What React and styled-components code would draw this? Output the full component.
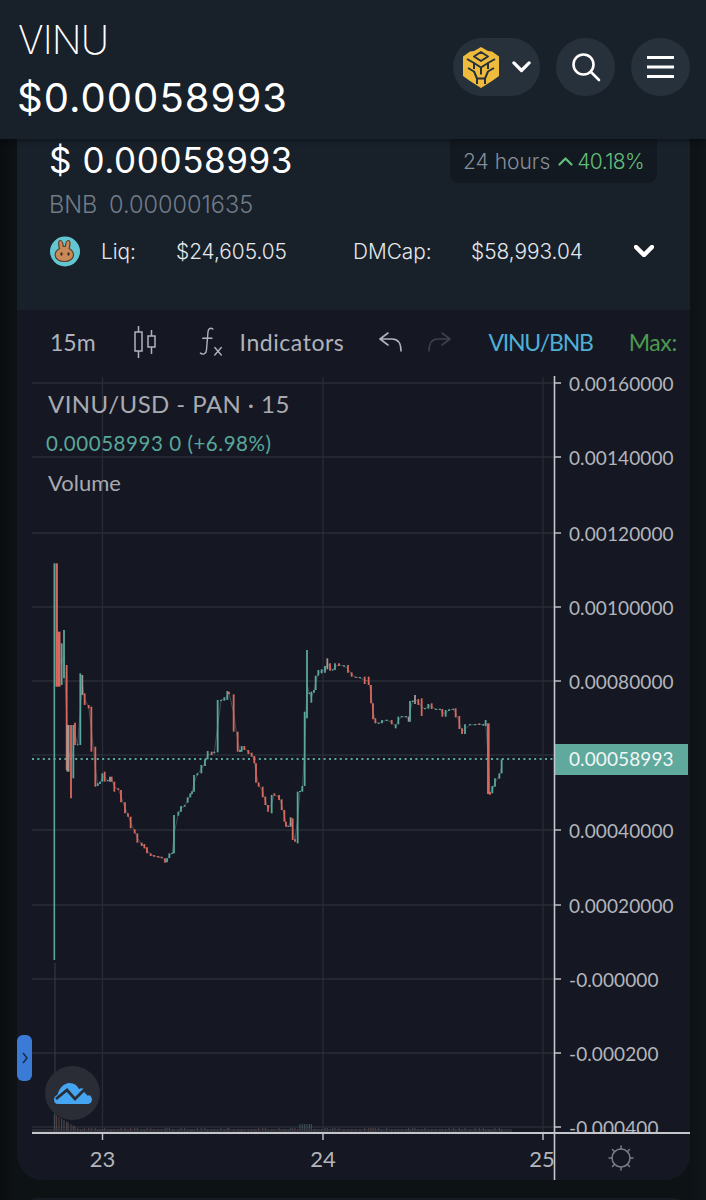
import React from "react";
import styled, { createGlobalStyle } from "styled-components";

const Global = createGlobalStyle`
  html, body { margin: 0; padding: 0; background: #0c1114; }
  body { width: 706px; height: 1200px; overflow: hidden; font-family: Inter, "Liberation Sans", sans-serif; }
`;

const Page = styled.div`
  width: 706px; height: 1200px; overflow: hidden; display: flex; flex-direction: column;
  background: linear-gradient(90deg, #090d10 0, #0d1215 17px, #0d1215 690px, #0f1519 706px);
`;
const Header = styled.header`
  height: 139px; flex: none; box-sizing: border-box; padding: 17px 16px 0 18px; background: #18202a;
  display: flex; justify-content: space-between; align-items: flex-start;
  box-shadow: 0 2px 5px rgba(0,0,0,.35); position: relative; z-index: 2;
`;
const TitleBlock = styled.div`display: flex; flex-direction: column; color: #fff;`;
const Symbol = styled.div`font-size: 39px; line-height: 46px; font-weight: 200; letter-spacing: -.9px;`;
const HeadPrice = styled.div`font-size: 40px; line-height: 52px; margin-top: 9px; font-weight: 400; letter-spacing: 1.05px; margin-left: -1px;`;
const Actions = styled.div`display: flex; gap: 16px; margin-top: 21px;`;
const Round = styled.button`
  height: 58px; width: ${p => p.$w || 59}px; border: 0; padding: 0; border-radius: 29px; background: #27313b; color: #fff;
  display: flex; align-items: center; justify-content: center; gap: 13px;
`;
const Summary = styled.section`
  flex: none; height: 171px; margin: 0 16px 0 17px; box-sizing: border-box; padding: 0 33px; background: #18202a;
  display: flex; flex-direction: column;
`;
const SumTop = styled.div`display: flex; justify-content: space-between; align-items: flex-start;`;
const SumPrice = styled.div`font-size: 35px; line-height: 44px; color: #fff; font-weight: 400; margin: -1px 0 0 -1px; letter-spacing: .6px;`;
const Change = styled.div`
  width: 207px; height: 44px; box-sizing: border-box; padding: 0 13px; border-radius: 0 0 9px 9px;
  background: #121920; display: flex; align-items: center; font-size: 21px; font-weight: 300; color: #868e9a; white-space: nowrap;
`;
const Up = styled.span`color: #62bd7c; display: inline-flex; align-items: center; gap: 4px; margin-left: 8px; letter-spacing: -.6px;`;
const Bnb = styled.div`font-size: 23.5px; line-height: 30px; color: #717b88; font-weight: 300; margin: 7px 0 0 -1px; word-spacing: 5px;`;
const Stats = styled.div`display: flex; align-items: center; height: 32px; margin-top: 15px; color: #e5e8ec; font-size: 20.8px; font-weight: 300; white-space: nowrap;`;
const Stat = styled.span`width: ${p => p.$w}px; flex: none;`;
const CornerChevron = styled.span`color: #fff; display: flex;`;
const ChartPanel = styled.section`
  flex: none; height: 870px; margin: 0 16px 0 17px; background: #151822; border-radius: 0 0 25px 25px;
  display: flex; flex-direction: column; position: relative; overflow: hidden; font-family: Lato, "Liberation Sans", sans-serif;
`;
const Toolbar = styled.div`
  height: 65px; flex: none; box-sizing: border-box; padding: 0 0 2px 33px; display: flex; align-items: center; font-size: 23px; white-space: nowrap; overflow: hidden;
`;
const ToolText = styled.span`color: ${p => p.$c || "#b0b3bb"}; margin-left: ${p => p.$ml || 0}px; letter-spacing: ${p => p.$ls || 0}px; flex: none;`;
const ToolIcon = styled.svg`margin-left: ${p => p.$ml || 0}px; flex: none;`;
const ChartArea = styled.div`position: relative; flex: 1; min-height: 0;`;
const Plot = styled.svg`display: block;`;
const PriceText = styled.text`font-family: Lato, "Liberation Sans", sans-serif; font-size: 19px; fill: #b3b5bc; letter-spacing: .1px;`;
const TimeText = styled.text`font-family: Lato, "Liberation Sans", sans-serif; font-size: 22px; fill: #b3b5bc; text-anchor: middle;`;
const TagText = styled.text`font-family: Lato, "Liberation Sans", sans-serif; font-size: 19px; fill: #f2f6f5; letter-spacing: .1px;`;
const Legend = styled.div`position: absolute; left: 31px; top: 10px; display: flex; flex-direction: column; align-items: flex-start;`;
const LegendTitle = styled.div`font-size: 24px; line-height: 38px; color: #a8aab1; letter-spacing: .42px; white-space: pre;`;
const LegendValue = styled.div`font-size: 20.5px; line-height: 30px; margin: 5px 0 0 -2px; color: #57a79a; letter-spacing: .55px; white-space: pre;`;
const LegendVol = styled.div`font-size: 22px; line-height: 30px; margin-top: 10px; color: #a8aab1;`;
const Toggle = styled.div`
  position: absolute; left: 0; top: 660px; width: 15px; height: 46px; border-radius: 6px; background: #3b7bd8;
  display: flex; align-items: center; justify-content: center;
`;
const Badge = styled.div`
  position: absolute; left: 28px; top: 691px; width: 55px; height: 54px; border-radius: 50%; background: #2b2d36;
  display: flex; align-items: center; justify-content: center;
`;
const NextCard = styled.div`flex: none; height: 20px; margin: 18px 16px 0 20px; background: #151c22; border-radius: 18px 18px 0 0;`;

const TEAL = "#5ba79b", RED = "#d9695f", GRAY = "#a09a96";
const t = TEAL, r = RED, g = GRAY;
const A = [
  [73,40,1230,t,1.6],[80,40,410,r,2.4],[87,245,410,r,3],[95,280,405,t],[102,240,385,t],[110,345,660,r],[114,525,665,g,3],[123,525,745,r],[130,525,685,t],[135,518,585,r],
  [143,583,586,t],[151,370,585,t],[157,375,435,g],[164,430,465,r],[176,465,475,r],[184,470,605,r],[196,590,710,r],[203,700,708,t],[210,695,702,t],[217,670,695,t],[224,665,695,r],
  [233,690,694,t],[240,680,695,g],[245,680,695,r],[253,695,725,r],[265,715,720,r],[273,720,757,r],[285,757,790,r],[294,790,800,r],[302,800,835,r],[314,838,850,r],[322,850,878,r],
  [335,878,888,r],[343,882,895,r],[351,892,910,r],[362,910,918,r],[372,915,920,r],[385,918,923,r],[395,920,925,r],[405,925,938,r],[411,925,937,t],[418,910,924,t],[427,908,912,t],[432,795,910,t],
  [445,785,797,t],[453,768,785,t],[464,765,770,t],[473,742,758,t],[481,730,742,t],[486,724,732,t],[492,675,725,t],[502,670,676,t],[514,645,670,t],[525,628,648,t],[533,603,628,t],[545,605,615,r],[553,605,610,t],
  [563,450,607,t],[573,449,453,t],[583,442,452,t],[592,423,450,t],[597,425,432,r],[611,433,545,r],[623,545,605,r],[630,600,606,t],[635,588,605,t],[643,588,600,r],[655,600,612,r],[665,608,620,r],[673,618,640,r],[678,640,698,r],[686,698,710,r],[698,710,742,r],[706,740,765,r],[714,765,785,r],
];
const B = [
  [5,495,550,t],[13,490,497,r],[27,495,510,r],[35,508,540,r],[43,540,575,r],[48,575,590,r],[55,588,591,t],[62,562,590,g],[68,565,630,r],[75,628,635,r],[83,485,640,t],[90,483,486,t],[97,468,485,t],[104,245,468,t],[111,60,265,t],
  [118,188,192,t],[124,185,218,t],[132,180,188,t],[137,137,180,t],[145,120,137,t],[155,118,130,t],[165,108,128,t],[172,85,118,g],[180,100,122,r],[188,118,122,t],[195,100,120,t],[207,100,108,r],[222,106,110,t],[234,105,128,r],[245,127,140,r],[257,140,144,r],[270,141,145,t],[284,140,162,r],[296,140,165,r],
  [303,165,220,r],[309,220,268,r],[316,265,280,r],[326,278,282,t],[336,270,280,t],[350,269,273,t],[365,270,283,r],[377,283,295,t],[385,260,283,t],[395,258,262,t],[408,258,262,t],[416,260,275,g],[420,213,275,t],[428,212,216,t],[435,195,222,g],[445,207,225,r],[455,205,258,r],[465,234,238,t],[475,222,236,t],[485,220,237,r],[497,236,240,t],[510,236,240,t],
  [517,237,260,r],[527,240,260,t],[537,238,243,t],[550,236,240,t],[557,235,262,r],[568,258,297,r],[576,295,312,r],[585,283,312,t],[600,282,286,t],[615,282,286,t],[628,280,285,r],[640,282,287,t],[647,270,288,t],[655,280,492,r,2.6],[660,486,494,r],[667,468,490,t],[675,445,470,t],[688,430,446,t],[695,388,430,t],
];
const candles = [
  ...A.map(([z,a,b,c,w]) => ({ x: 30 + z/3, y1: 550 + a/3, y2: 550 + b/3, c, w })),
  ...B.map(([z,a,b,c,w]) => ({ x: 270 + z/3, y1: 630 + a/3, y2: 630 + b/3, c, w })),
];
const connect = "M" + candles.slice(1).map((c) => `${c.x.toFixed(1)} ${((c.y1+c.y2)/2).toFixed(1)}`).join("L");
const rows = [
  [383,"0.00160000"],[457,"0.00140000"],[533,"0.00120000"],[607,"0.00100000"],[681,"0.00080000"],[755,null],[830,"0.00040000"],[905,"0.00020000"],[979,"-0.000000"],[1053,"-0.000200"],[1127,"-0.000400"],
];
const vols = candles.filter(c => c.x < 515).map(c => {
  const h = c.x < 80 ? Math.max(3, 18 - (c.x - 54) * .6) : (c.x > 298 && c.x < 312 ? 8 : 3 + (Math.round(c.x*7) % 2));
  return { x: c.x, h, c: c.c === RED ? "#5f4347" : "#44535c" };
});
const Y = 375;

function BnbLogo() {
  return (
    <svg width="36" height="41" viewBox="0 0 36 41">
      <path d="M18 0l7 4 4 .5 7 5V29l-7 5-11 7-11-7-7-5V9.500l7-5 4-.5z" fill="#efbb3c"/>
      <g fill="none" stroke="#27313b" strokeWidth="2" strokeLinejoin="round">
        <path d="M18 5l7 4.500-7 4.500-7-4.500z"/>
        <path d="M4 12l7 4v6M32 12l-7 4v6"/>
        <path d="M11 16l7 4.500 7-4.500M18 20.500v7"/>
        <path d="M5 21l6 3.500 3 7V37M31 21l-6 3.500-3 7V37M14 31.500h8"/>
      </g>
    </svg>
  );
}
const Chevron = ({ size = 22, w = 3.4, up }) => (
  <svg width={size} height={size * .6} viewBox="0 0 20 12">
    <path d={up ? "M2 10l8-8 8 8" : "M2 2l8 8 8-8"} fill="none" stroke="currentColor" strokeWidth={w} strokeLinecap="round" strokeLinejoin="round"/>
  </svg>
);
function Bunny() {
  return (
    <svg width="30" height="31" viewBox="0 0 30 31" style={{ display: "block", flex: "none" }}>
      <circle cx="15" cy="15.500" r="15" fill="#63c6d3"/>
      <path d="M9.500 12.500C8 7 8.700 4.500 10.300 4.500c1.700 0 2.700 3 3 6h2c.3-3 1.300-6 3-6 1.700 0 2.300 2.500.9 8 2.700 1.700 4.300 4 4.300 6.500 0 4-4.200 6.500-9.200 6.500S5.100 23 5.100 19c0-2.500 1.700-4.800 4.400-6.500z" fill="#c88a58" stroke="#5d3c26" strokeWidth="1.200"/>
      <ellipse cx="11.500" cy="18" rx="1.200" ry="1.700" fill="#3f2a1b"/>
      <ellipse cx="18.500" cy="18" rx="1.200" ry="1.700" fill="#3f2a1b"/>
    </svg>
  );
}

export default function App() {
  return (
    <Page>
      <Global />
      <Header>
        <TitleBlock>
          <Symbol>VINU</Symbol>
          <HeadPrice>$0.00058993</HeadPrice>
        </TitleBlock>
        <Actions>
          <Round $w={87}><BnbLogo /><Chevron size={19} /></Round>
          <Round>
            <svg width="30" height="30" viewBox="0 0 30 30" fill="none" stroke="#fff" strokeWidth="2.600" strokeLinecap="round"><circle cx="12.500" cy="12.500" r="10"/><path d="M20 20l8 8"/></svg>
          </Round>
          <Round>
            <svg width="27" height="24" viewBox="0 0 27 24" fill="none" stroke="#fff" strokeWidth="3"><path d="M0 2.500h27M0 12h27M0 21.500h27"/></svg>
          </Round>
        </Actions>
      </Header>
      <Summary>
        <SumTop>
          <SumPrice>$ 0.00058993</SumPrice>
          <Change>24 hours<Up><Chevron size={15} w={3} up />40.18%</Up></Change>
        </SumTop>
        <Bnb>BNB 0.000001635</Bnb>
        <Stats>
          <Bunny />
          <Stat $w={21} />
          <Stat $w={75}>Liq:</Stat>
          <Stat $w={177}>$24,605.05</Stat>
          <Stat $w={118}>DMCap:</Stat>
          <Stat $w={163}>$58,993.04</Stat>
          <CornerChevron><Chevron size={20} w={4.500} /></CornerChevron>
        </Stats>
      </Summary>
      <ChartPanel>
        <Toolbar>
          <ToolText>15m</ToolText>
          <ToolIcon $ml={37} width="26" height="34" viewBox="0 0 26 34" fill="none" stroke="#b0b3bb" strokeWidth="1.500">
            <path d="M2 7h7v19H2zM5.500 1v6M5.500 26v7M15 11h7v11h-7zM18.500 5v6M18.500 22v7"/>
          </ToolIcon>
          <ToolIcon $ml={40} width="26" height="34" viewBox="0 0 28 34" fill="none" stroke="#b0b3bb" strokeWidth="1.500" strokeLinecap="round">
            <path d="M15 3c-3-2-5 0-5.300 3L8 26c-.3 4-4 5-6.500 3M4 13h10M17 23l7 8M24 23l-7 8"/>
          </ToolIcon>
          <ToolText $ml={15} $ls={.55}>Indicators</ToolText>
          <ToolIcon $ml={35} width="24" height="20" viewBox="0 0 24 20" fill="none" stroke="#b0b3bb" strokeWidth="1.600" strokeLinecap="round" strokeLinejoin="round">
            <path d="M9 1L1 7l8 6M1 7h12c6 0 9 4 9 12"/>
          </ToolIcon>
          <ToolIcon $ml={24} width="24" height="20" viewBox="0 0 24 20" fill="none" stroke="#3c404a" strokeWidth="1.600" strokeLinecap="round" strokeLinejoin="round">
            <path d="M15 1l8 6-8 6M23 7H11C5 7 2 11 2 19"/>
          </ToolIcon>
          <ToolText $ml={37} $c="#4fafd6" $ls={-1.2}>VINU/BNB</ToolText>
          <ToolText $ml={36} $c="#4c9a4e" $ls={-.4}>Max:</ToolText>
        </Toolbar>
        <ChartArea>
          <Plot width="673" height="805" viewBox={`17 ${Y} 673 805`}>
            <g stroke="#292c36" strokeWidth="1.300">
              {[102.5, 323, 543].map(x => <line key={x} x1={x} x2={x} y1="377" y2="1133" />)}
              {rows.map(([y]) => <line key={y} x1="32" x2="554" y1={y} y2={y} />)}
            </g>
            <line x1="55" x2="55" y1="963" y2="1133" stroke="#3a3d47" strokeWidth="1"/>
            <g>
              {vols.map((v, i) => <rect key={i} x={v.x - .5} y={1132 - v.h} width="1" height={v.h} fill={v.c} />)}
              <rect x="32" y="1129" width="480" height="3" fill="#34363e" opacity=".7"/>
            </g>
            <line x1="32" x2="554" y1="759" y2="759" stroke={TEAL} strokeWidth="1.800" strokeDasharray="2 3.400"/>
            <path d={connect} fill="none" stroke="#6f8f90" strokeWidth=".8" opacity=".55"/>
            {candles.map((c, i) => <line key={i} x1={c.x} x2={c.x} y1={c.y1} y2={c.y2} stroke={c.c} strokeWidth={c.w || 1.800}/>)}
            {rows.map(([y, l]) => (
              <g key={y}>
                <line x1="554" x2="561" y1={y} y2={y} stroke="#c4c6cc" strokeWidth="1.400"/>
                {l && <PriceText x="569" y={y + 8}>{l}</PriceText>}
              </g>
            ))}
            <rect x="32" y="1133" width="658" height="48" fill="#151822"/>
            <rect x="554" y="744" width="134" height="31" fill="#5fa99d"/>
            <TagText x="569" y="766">0.00058993</TagText>
            <line x1="554.500" x2="554.500" y1="376" y2="1180" stroke="#c4c6cc" strokeWidth="1.600"/>
            <line x1="32" x2="690" y1="1133" y2="1133" stroke="#c4c6cc" strokeWidth="1.800"/>
            {[102.5, 323, 543].map(x => <line key={x} x1={x} x2={x} y1="1133" y2="1140" stroke="#c4c6cc" strokeWidth="1.400"/>)}
            <TimeText x="102.500" y="1167">23</TimeText>
            <TimeText x="323" y="1167">24</TimeText>
            <TimeText x="542" y="1167">25</TimeText>
            <g fill="none" stroke="#797c85" strokeWidth="1.500" strokeLinecap="round">
              <circle cx="621" cy="1158" r="9"/>
              <path d="M621 1146v3M621 1167v3M609 1158h3M630 1158h3M612.500 1149.500l2.200 2.200M627.300 1164.300l2.200 2.200M612.500 1166.500l2.200-2.200M627.300 1151.700l2.200-2.200"/>
            </g>
          </Plot>
          <Legend>
            <LegendTitle>VINU/USD - PAN · 15</LegendTitle>
            <LegendValue>0.00058993 0 (+6.98%)</LegendValue>
            <LegendVol>Volume</LegendVol>
          </Legend>
          <Toggle>
            <svg width="8" height="14" viewBox="0 0 8 14" fill="none" stroke="#1c2a44" strokeWidth="1.500"><path d="M2 2l4 5-4 5"/></svg>
          </Toggle>
          <Badge>
            <svg width="38" height="23" viewBox="0 0 38 23">
              <path d="M4 22C1 22 0 20 0 17.500c0-2.500 1.500-4 3.500-4.500C5 6 10 1 15.500 1 20 1 23 3 25 7c2-1.500 5-1 6.500 1.500.8 1.300 1 2.500 1 3.500 3 .5 5.500 3 5.500 5.500 0 2.800-2 4.500-4.500 4.500z" fill="#45a5f1"/>
              <path d="M2 17l11-9 8 9 9-9 5 5" fill="none" stroke="#2b2d36" strokeWidth="2.800" strokeLinejoin="miter"/>
            </svg>
          </Badge>
        </ChartArea>
      </ChartPanel>
      <NextCard />
    </Page>
  );
}
